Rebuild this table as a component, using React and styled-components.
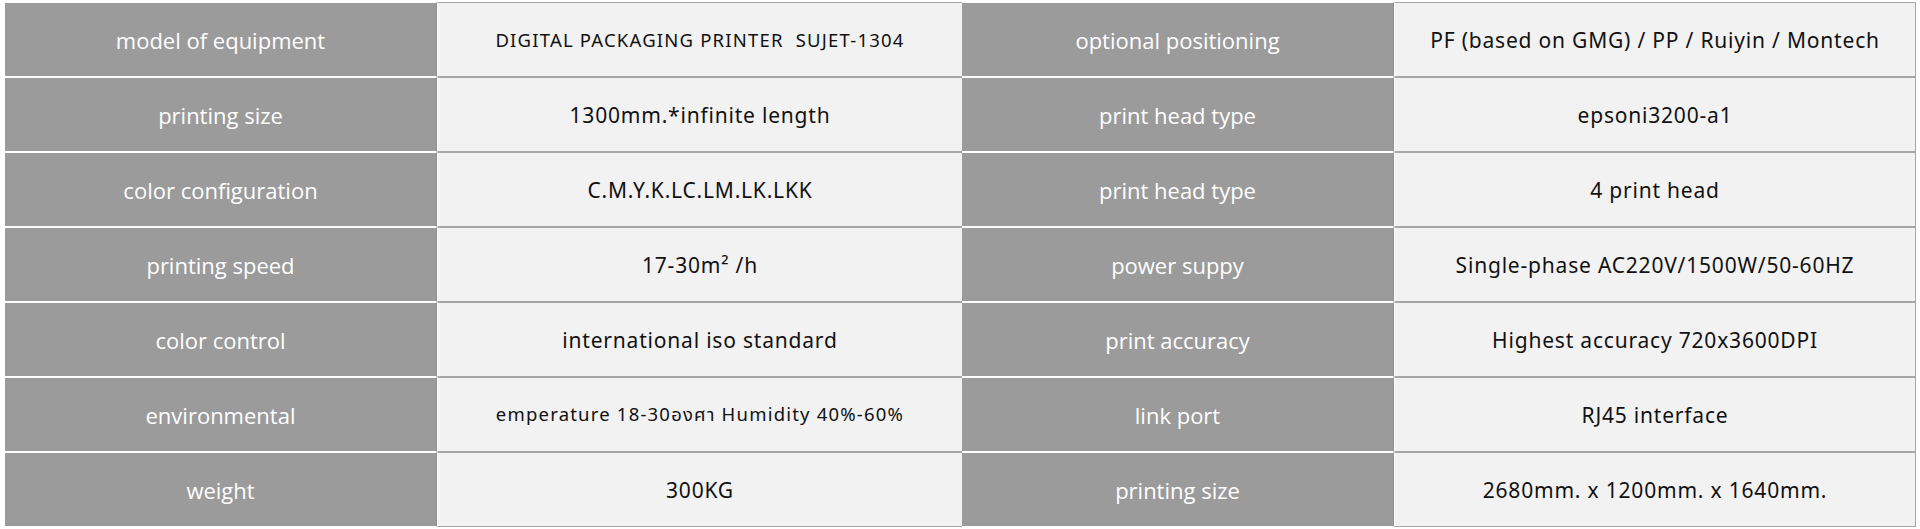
import styled, { createGlobalStyle } from 'styled-components';

const GlobalStyle = createGlobalStyle`
  html, body {
    margin: 0;
    padding: 0;
    background: #ffffff;
  }
`;

const rows = [
  ['model of equipment', 'DIGITAL PACKAGING PRINTER\u00a0\u00a0SUJET-1304', 'optional positioning', 'PF (based on GMG) / PP / Ruiyin / Montech', true],
  ['printing size', '1300mm.*infinite length', 'print head type', 'epsoni3200-a1'],
  ['color configuration', 'C.M.Y.K.LC.LM.LK.LKK', 'print head type', '4 print head'],
  ['printing speed', '17-30m\u00b2 /h', 'power suppy', 'Single-phase AC220V/1500W/50-60HZ'],
  ['color control', 'international iso standard', 'print accuracy', 'Highest accuracy 720x3600DPI'],
  ['environmental', 'emperature 18-30องศา Humidity 40%-60%', 'link port', 'RJ45 interface', true],
  ['weight', '300KG', 'printing size', '2680mm. x 1200mm. x 1640mm.'],
];

const Page = styled.div`
  padding: 2px 4px 0 5px;
`;

const SpecTable = styled.div`
  display: flex;
  flex-direction: column;
`;

const Row = styled.div`
  display: grid;
  grid-template-columns: 432px 525px 432px 1fr;
  height: 75px;
`;

const HeadCell = styled.div`
  display: flex;
  align-items: center;
  justify-content: center;
  background: #9b9b9b;
  color: #ffffff;
  font-family: "Open Sans", "Noto Sans", sans-serif;
  font-size: 22px;
  border-top: 1px solid #ffffff;
  border-bottom: 1px solid #ffffff;
  border-right: 1px solid #8e8e8e;
  box-sizing: border-box;
`;

const ValueCell = styled.div`
  display: flex;
  align-items: center;
  justify-content: center;
  background: #f2f2f2;
  color: #111111;
  font-family: "Noto Sans", "Noto Sans Thai", "DejaVu Sans", sans-serif;
  font-size: ${p => (p.$small ? '18.5px' : '21px')};
  letter-spacing: ${p => (p.$small ? '1.2px' : '0.8px')};
  border-top: 1px solid #a6a6a6;
  border-bottom: 1px solid #a6a6a6;
  border-left: 1px solid #ffffff;
  border-right: ${p => (p.$last ? '1px solid #a6a6a6' : '0')};
  box-sizing: border-box;
`;

export default function App() {
  return (
    <Page>
      <GlobalStyle />
      <SpecTable>
        {rows.map(([k1, v1, k2, v2, small], i) => (
          <Row key={i}>
            <HeadCell>{k1}</HeadCell>
            <ValueCell $small={small}>{v1}</ValueCell>
            <HeadCell>{k2}</HeadCell>
            <ValueCell $last>{v2}</ValueCell>
          </Row>
        ))}
      </SpecTable>
    </Page>
  );
}
